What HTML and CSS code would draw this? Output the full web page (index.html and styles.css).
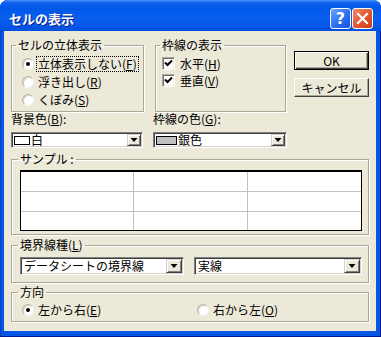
FILE: index.html
```html
<!DOCTYPE html>
<html lang="ja">
<head>
  <meta charset="UTF-8">
  <title>セルの表示</title>
  <link rel="stylesheet" href="styles.css">
</head>
<body>
<div class="window">
  <div class="titlebar">
    <span class="title">セルの表示</span>
    <div class="title-buttons">
      <span class="tbtn help">?</span>
      <span class="tbtn close">
        <svg width="19" height="19" viewBox="0 0 19 19"><path d="M5 5 L14 14 M14 5 L5 14" stroke="#fff" stroke-width="2.2" stroke-linecap="square"/></svg>
      </span>
    </div>
  </div>

  <div class="client">
    <div class="top-row">
      <fieldset class="group effect">
        <legend>セルの立体表示</legend>
        <div class="group-body">
          <label class="opt"><span class="radio checked"></span><span class="focus">立体表示しない(<u>F</u>)</span></label>
          <label class="opt"><span class="radio"></span><span class="txt">浮き出し(<u>R</u>)</span></label>
          <label class="opt"><span class="radio"></span><span class="txt">くぼみ(<u>S</u>)</span></label>
        </div>
      </fieldset>

      <fieldset class="group lines">
        <legend>枠線の表示</legend>
        <div class="group-body">
          <label class="opt check"><span class="checkbox"><svg width="11" height="11" viewBox="0 0 11 11"><path d="M2 4.5 L4.5 7 L9 2.5" fill="none" stroke="#000" stroke-width="2"/></svg></span><span class="txt">水平(<u>H</u>)</span></label>
          <label class="opt check"><span class="checkbox"><svg width="11" height="11" viewBox="0 0 11 11"><path d="M2 4.5 L4.5 7 L9 2.5" fill="none" stroke="#000" stroke-width="2"/></svg></span><span class="txt">垂直(<u>V</u>)</span></label>
        </div>
      </fieldset>

      <div class="buttons">
        <button class="btn default">OK</button>
        <button class="btn">キャンセル</button>
      </div>
    </div>

    <div class="color-row">
      <div class="field bg-field">
        <div class="field-label">背景色(<u>B</u>):</div>
        <div class="combo">
          <span class="combo-value"><span class="swatch white"></span><span class="txt">白</span></span>
          <span class="drop"></span>
        </div>
      </div>
      <div class="field line-field">
        <div class="field-label">枠線の色(<u>G</u>):</div>
        <div class="combo">
          <span class="combo-value"><span class="swatch silver"></span><span class="txt">銀色</span></span>
          <span class="drop"></span>
        </div>
      </div>
    </div>

    <fieldset class="group sample-group">
      <legend>サンプル :</legend>
      <div class="group-body">
        <div class="sample">
          <div></div><div></div><div></div>
          <div></div><div></div><div></div>
          <div></div><div></div><div></div>
        </div>
      </div>
    </fieldset>

    <fieldset class="group border-group">
      <legend>境界線種(<u>L</u>)</legend>
      <div class="group-body">
        <div class="combo big first">
          <span class="combo-value"><span class="txt">データシートの境界線</span></span>
          <span class="drop"></span>
        </div>
        <div class="combo big second">
          <span class="combo-value"><span class="txt">実線</span></span>
          <span class="drop"></span>
        </div>
      </div>
    </fieldset>

    <fieldset class="group dir-group">
      <legend>方向</legend>
      <div class="group-body">
        <label class="opt"><span class="radio checked"></span><span class="txt">左から右(<u>E</u>)</span></label>
        <label class="opt"><span class="radio"></span><span class="txt">右から左(<u>O</u>)</span></label>
      </div>
    </fieldset>
  </div>
</div>
</body>
</html>
```

FILE: styles.css
```css
* {
  box-sizing: border-box;
}
body {
  margin: 0;
  background: #fff;
  font-family: "Noto Sans CJK JP", "Noto Sans", sans-serif;
  font-size: 12px;
  color: #000;
}
u {
  text-decoration: underline;
  text-underline-offset: 1px;
}

/* window frame */
.window {
  width: 381px;
  height: 337px;
  display: flex;
  flex-direction: column;
  background: #0656e6;
  border-radius: 8px 8px 0 0;
  box-shadow: inset -1px -1px #001a94, inset 1px 0 #0a3fc8;
}
.titlebar {
  height: 31px;
  display: flex;
  align-items: flex-start;
  justify-content: space-between;
  padding: 8px 8px 0 8px;
  border-radius: 8px 8px 0 0;
  background: linear-gradient(#4a94ff 0, #1a6cf2 2px, #0a5eec 4px, #0058e8 9px, #0a5fee 18px, #0558e9 26px, #004fdc 31px);
}
.title {
  line-height: 21px;
  font-size: 13px;
  font-weight: bold;
  color: #fff;
  text-shadow: 1px 1px #0a1d8a;
  padding-left: 1px;
}
.title-buttons {
  display: flex;
  gap: 1px;
}
.tbtn {
  width: 21px;
  height: 21px;
  display: flex;
  align-items: center;
  justify-content: center;
  border: 1px solid #fff;
  border-radius: 3px;
  color: #fff;
}
.help {
  background: linear-gradient(135deg, #6aa6ff, #2b6ff0 55%, #1a55dc);
  font: bold 16px "DejaVu Sans", sans-serif;
}
.close {
  background: linear-gradient(135deg, #f08a66, #e0552e 55%, #c83a16);
}

.client {
  flex: 1;
  margin: 0 5px 6px 4px;
  background: #ece9d8;
  padding: 7px 7px 0 7px;
}

/* group boxes */
.group {
  margin: 0;
  padding: 0;
  min-width: 0;
  border: 1px solid #aca899;
  box-shadow: inset 1px 1px #fff, 1px 1px #fff;
}
.group legend {
  padding: 0 2px;
  margin-left: 4px;
  line-height: 14px;
}
.opt {
  display: flex;
  align-items: center;
  gap: 4px;
  height: 18px;
  line-height: 14px;
  white-space: nowrap;
}
.focus {
  outline: 1px dotted #000;
  padding: 0 1px;
  margin-left: -1px;
}

.top-row {
  display: flex;
}
.effect {
  width: 133px;
}
.effect .group-body {
  padding: 3px 4px 2px 10px;
}
.lines {
  width: 131px;
  margin-left: 11px;
}
.lines .group-body {
  padding: 3px 4px 2px 6px;
}
.lines .opt {
  height: 17px;
}

.radio {
  position: relative;
  width: 12px;
  height: 12px;
  flex: none;
  border-radius: 50%;
  background: #fff;
  border: 1px solid;
  border-color: #b8b5a6 #f4f3ee #f4f3ee #b8b5a6;
  box-shadow: inset 1px 1px #d6d3c6;
}
.radio.checked::after {
  content: "";
  position: absolute;
  left: 3px;
  top: 3px;
  width: 4px;
  height: 4px;
  border-radius: 50%;
  background: #000;
}
.checkbox {
  width: 13px;
  height: 13px;
  flex: none;
  display: flex;
  align-items: center;
  justify-content: center;
  background: #fff;
  border: 1px solid;
  border-color: #aca899 #fff #fff #aca899;
  box-shadow: inset 1px 1px #716f64, inset -1px -1px #f1efe2;
  margin-right: 1px;
}

/* buttons */
.buttons {
  margin-left: auto;
  padding-top: 13px;
  display: flex;
  flex-direction: column;
  gap: 8px;
}
.btn {
  width: 75px;
  height: 19px;
  padding: 0;
  font-family: inherit;
  font-size: 12px;
  line-height: 14px;
  color: #000;
  background: #ece9d8;
  border: 1px solid;
  border-color: #fff #404040 #404040 #fff;
  box-shadow: inset -1px -1px #aca899;
}
.btn.default {
  border: 1px solid #000;
  box-shadow: inset 1px 1px #fff, inset -1px -1px #404040, inset -2px -2px #aca899;
}

/* colour fields */
.color-row {
  display: flex;
}
.bg-field {
  width: 132px;
}
.line-field {
  width: 134px;
  margin-left: 10px;
}
.field-label {
  line-height: 14px;
  height: 14px;
}
.combo {
  display: flex;
  align-items: stretch;
  height: 16px;
  margin-top: 6px;
  background: #fff;
  border: 1px solid;
  border-color: #808080 #fff #fff #808080;
  box-shadow: inset 1px 1px #404040, inset -1px -1px #d4d0c8;
  padding: 1px;
}
.combo-value {
  flex: 1;
  min-width: 0;
  display: flex;
  align-items: center;
  gap: 1px;
  padding-left: 1px;
  white-space: nowrap;
}
.combo-value .txt {
  line-height: 14px;
  margin: -1px 0;
}
.swatch {
  height: 9px;
  border: 1px solid #000;
  flex: none;
}
.swatch.white {
  width: 16px;
  background: #fff;
}
.swatch.silver {
  width: 21px;
  background: #c0c0c0;
}
.drop {
  width: 14px;
  flex: none;
  display: flex;
  align-items: center;
  justify-content: center;
  background: #ece9d8;
  border: 1px solid;
  border-color: #d4d0c8 #404040 #404040 #d4d0c8;
  box-shadow: inset 1px 1px #fff, inset -1px -1px #808080;
}
.drop::after {
  content: "";
  width: 7px;
  height: 4px;
  background: #000;
  clip-path: polygon(0 0, 100% 0, 50% 100%);
}

/* sample */
.sample-group {
  margin-top: 4px;
}
.sample-group legend,
.border-group legend,
.dir-group legend {
  margin-left: 6px;
}
.sample-group .group-body {
  padding: 4px 6px 3px 8px;
}
.sample {
  display: grid;
  grid-template-columns: 112px 113px 113px;
  grid-template-rows: 19px 19px 18px;
  gap: 1px;
  background: #c0c0c0;
  border: 1px solid #000;
  border-top-width: 2px;
}
.sample div {
  background: #fff;
}

/* border type */
.border-group {
  margin-top: 3px;
}
.border-group .group-body {
  display: flex;
  gap: 10px;
  padding: 5px 6px 7px 8px;
}
.combo.big {
  height: 18px;
  margin-top: 0;
}
.combo.big .drop {
  width: 16px;
}
.combo.big .combo-value {
  padding-left: 2px;
}
.combo.first {
  width: 164px;
}
.combo.second {
  flex: 1;
}

/* direction */
.dir-group {
  margin-top: 2px;
}
.dir-group .group-body {
  display: grid;
  grid-template-columns: 175px 1fr;
  padding: 2px 4px 2px 10px;
}
```
